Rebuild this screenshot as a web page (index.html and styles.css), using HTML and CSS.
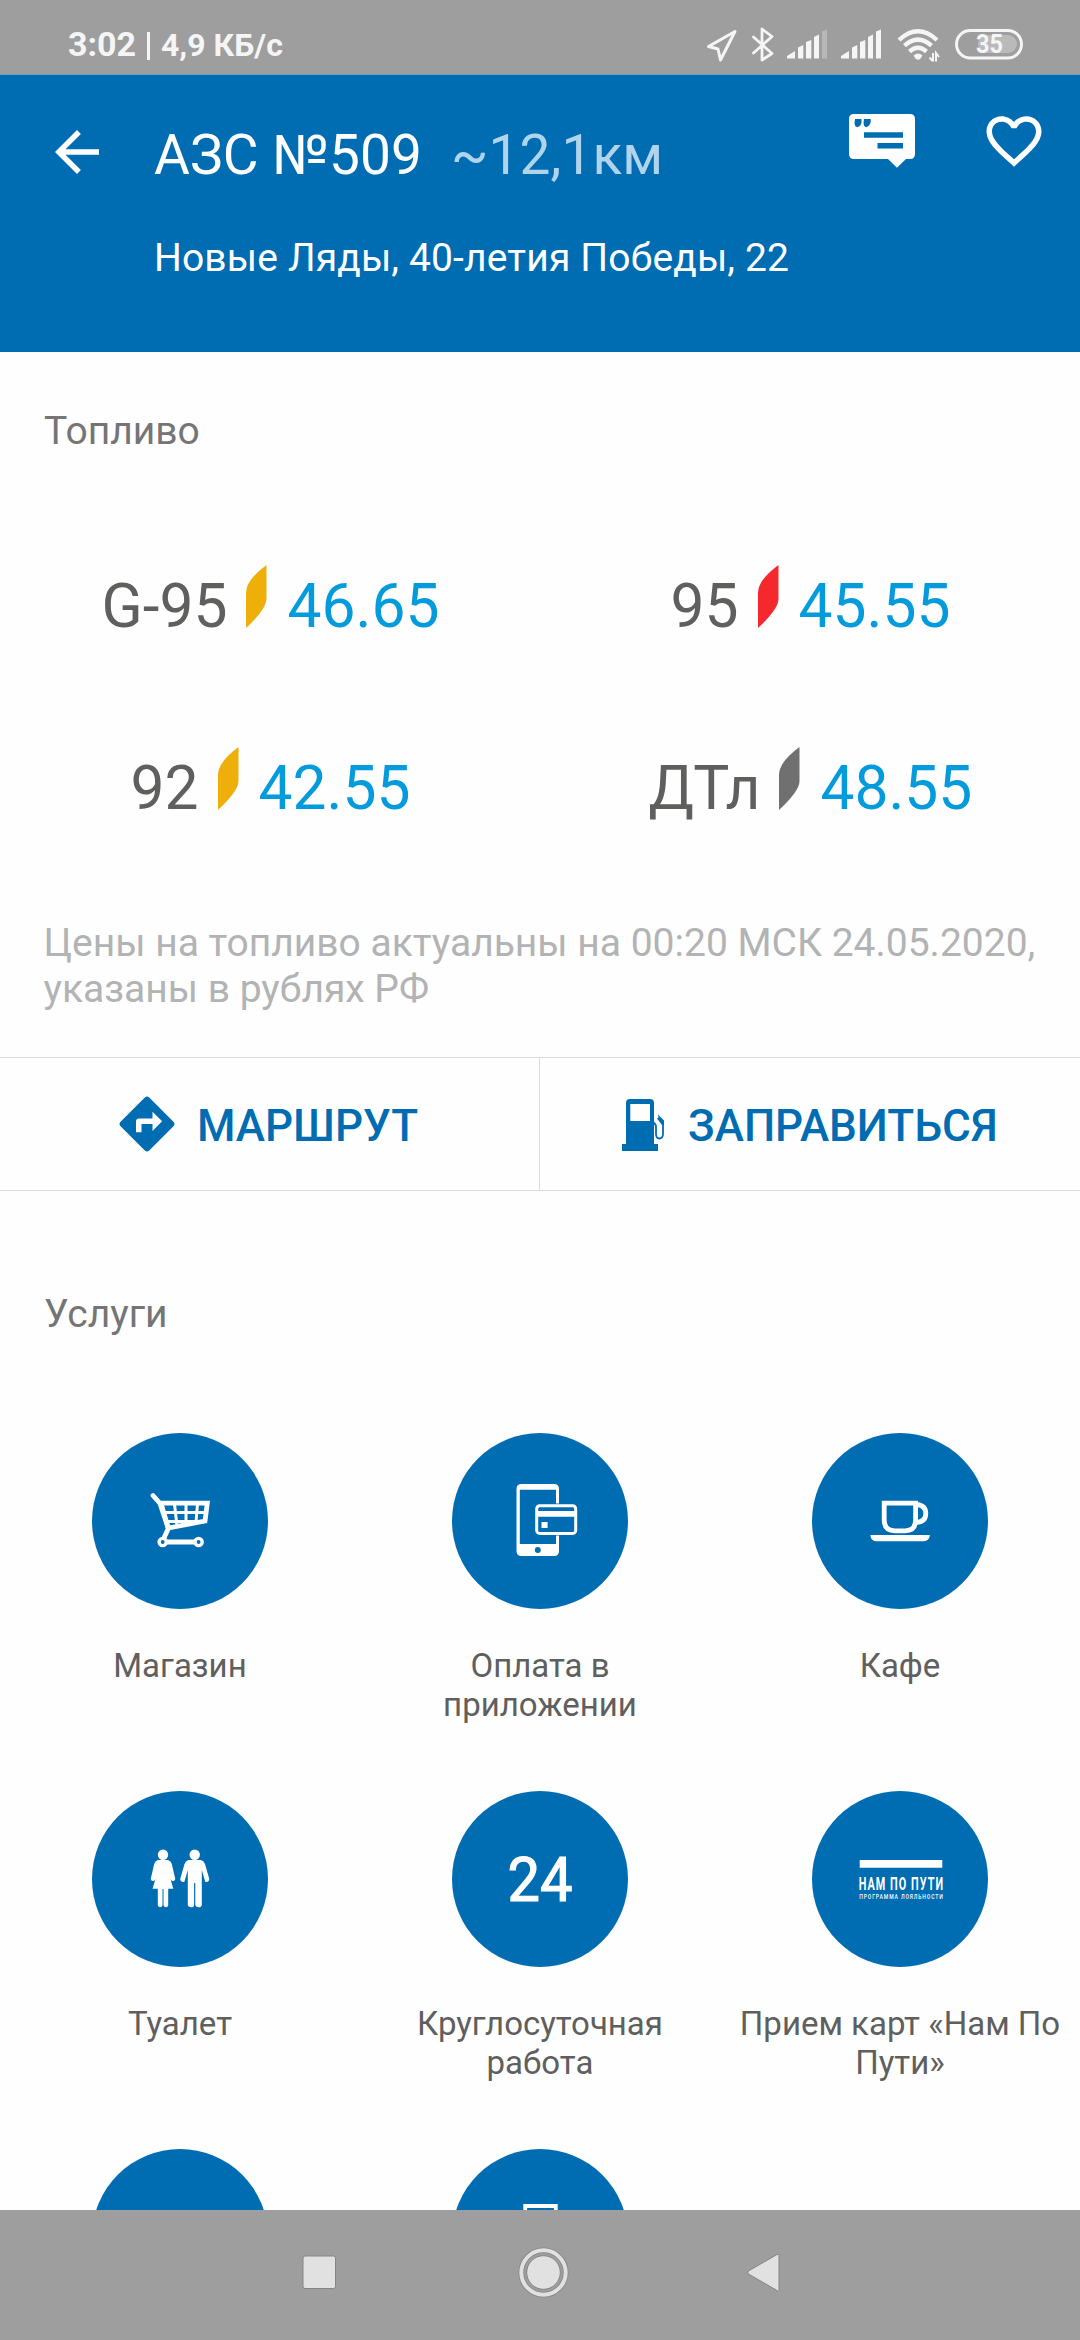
FILE: index.html
```html
<!DOCTYPE html>
<html lang="ru">
<head>
<meta charset="utf-8">
<title>АЗС №509</title>
<link rel="stylesheet" href="styles.css">
</head>
<body>
<div class="screen">
  <div class="status">
    <div class="status-left"><span class="clock">3:02</span><span class="speed"><i class="bar"></i>4,9 КБ/с</span></div>
    <svg class="status-icons" width="336" height="74" viewBox="704 0 336 74">
      <path d="M735 31.5 L708.5 46.5 L718 49 L720.5 60 Z" fill="none" stroke="#f5f5f5" stroke-width="3" stroke-linejoin="round"/>
      <path d="M753.5 37 L772 53.5 L762 60 V29 L772 36.5 L753.5 53" fill="none" stroke="#f5f5f5" stroke-width="2.8" stroke-linejoin="round" stroke-linecap="round"/>
      <g fill="#f5f5f5">
        <path d="M787 58.5 V56 L795 51 V58.5 Z M798 58.5 V47.5 L803.3 45 V58.5 Z M806 58.5 V42 L811.3 40 V58.5 Z M814 58.5 V37 L819 34.5 V58.5 Z"/>
        <path d="M822 58.5 V31.5 L827 29.5 V58.5 Z" opacity=".3"/>
        <path d="M841 58.5 V56 L849 51 V58.5 Z M852 58.5 V47.5 L857.3 45 V58.5 Z M860 58.5 V42 L865.3 40 V58.5 Z M868 58.5 V37 L873 34.5 V58.5 Z M876 58.5 V31.5 L881 29.5 V58.5 Z"/>
        <path d="M913.5 55.5 Q918 51.5 922.5 55.5 L920.5 58.5 Q918 61 915.5 58.5 Z"/>
        <path d="M933 53 V61.5 M929.5 57.5 L932.5 61 M936 61.5 V53 L939 57" fill="none" stroke="#f5f5f5" stroke-width="2"/>
      </g>
      <path d="M899 40 Q918 22.5 937 40 M904.5 45.7 Q918 33.5 931.5 45.7 M909.5 51.5 Q918 44 926.5 51.5" fill="none" stroke="#f5f5f5" stroke-width="4.4"/>
      <rect x="978" y="35" width="39" height="18" rx="9" fill="#bababa"/>
      <rect x="956.5" y="30.5" width="65" height="27.5" rx="13.7" fill="none" stroke="#f5f5f5" stroke-width="3"/>
      <text class="battery-text" x="976" y="53" textLength="27" lengthAdjust="spacingAndGlyphs">35</text>
    </svg>
  </div>

  <header class="header">
    <svg class="back" width="66" height="66" viewBox="0 0 24 24"><path fill="#fff" d="M20 11H7.83l5.59-5.59L12 4l-8 8 8 8 1.41-1.41L7.83 13H20v-2z"/></svg>
    <div class="heading">
      <div class="title-row"><span class="title">АЗС №509</span><span class="distance">~12,1км</span></div>
      <div class="address">Новые Ляды, 40-летия Победы, 22</div>
    </div>
    <svg class="comment" width="66" height="54" viewBox="0 0 66 54">
      <path fill="#fff" d="M5 0H61Q66 0 66 5V40Q66 45 61 45H57L48 53.8L39 45H5Q0 45 0 40V5Q0 0 5 0Z"/>
      <path fill="#006cb2" d="M15 18.3H54V23.7H15Z M28.5 29H54V34.5H28.5Z M6 5H12.5V8Q12.5 12 8 13.3Q5.5 12 5.5 9Z M15 5H21.7V8Q21 12 17 13.3Q14.5 12 14.5 9Z"/>
    </svg>
    <svg class="heart" width="66" height="66" viewBox="0 0 24 24"><path fill="#fff" d="M16.5 3c-1.74 0-3.41.81-4.5 2.09C10.91 3.81 9.24 3 7.5 3 4.42 3 2 5.42 2 8.5c0 3.78 3.4 6.86 8.55 11.54L12 21.35l1.45-1.32C18.6 15.36 22 12.28 22 8.5 22 5.42 19.58 3 16.5 3zm-4.4 15.55l-.1.1-.1-.1C7.14 14.24 4 11.39 4 8.5 4 6.5 5.5 5 7.5 5c1.54 0 3.04.99 3.57 2.36h1.87C13.46 5.99 14.96 5 16.5 5c2 0 3.5 1.5 3.5 3.5 0 2.89-3.14 5.74-7.9 10.05z"/></svg>
  </header>

  <main class="content">
    <h2 class="section-title">Топливо</h2>
    <div class="fuel-grid">
      <div class="fuel"><span>G-95</span><svg class="leaf yellow" viewBox="0 0 21 63"><path d="M20.5 0V34Q20.5 44 0 63V28Q0 15 20.5 0Z"/></svg><span class="price">46.65</span></div>
      <div class="fuel"><span>95</span><svg class="leaf red" viewBox="0 0 21 63"><path d="M20.5 0V34Q20.5 44 0 63V28Q0 15 20.5 0Z"/></svg><span class="price">45.55</span></div>
      <div class="fuel"><span>92</span><svg class="leaf yellow" viewBox="0 0 21 63"><path d="M20.5 0V34Q20.5 44 0 63V28Q0 15 20.5 0Z"/></svg><span class="price">42.55</span></div>
      <div class="fuel"><span>ДТл</span><svg class="leaf grey" viewBox="0 0 21 63"><path d="M20.5 0V34Q20.5 44 0 63V28Q0 15 20.5 0Z"/></svg><span class="price">48.55</span></div>
    </div>
    <p class="note">Цены на топливо актуальны на 00:20 МСК 24.05.2020, указаны в рублях РФ</p>

    <div class="actions">
      <div class="action">
        <svg class="route" width="66" height="66" viewBox="0 0 24 24"><path fill="#006cb2" d="M21.71 11.29l-9-9c-.39-.39-1.02-.39-1.41 0l-9 9c-.39.39-.39 1.02 0 1.41l9 9c.39.39 1.02.39 1.41 0l9-9c.39-.38.39-1.01 0-1.41zM14 14.5V12h-4v3H8v-4c0-.55.45-1 1-1h5V7.5l3.5 3.5-3.5 3.5z"/></svg>
        <span>МАРШРУТ</span>
      </div>
      <div class="action refuel">
        <svg class="pump" width="44" height="54" viewBox="0 0 44 54">
          <path fill="#006cb2" fill-rule="evenodd" d="M4 6Q4 2 8 2H28Q32 2 32 6V47H36V54H0V47H4Z M8.3 7V24H28V7Z"/>
          <path fill="none" stroke="#006cb2" stroke-width="1.8" d="M31 25Q34 27 34 30V37Q34 41.5 37.2 41.5Q41 41.5 41 37V24"/>
          <path fill="#006cb2" d="M36 17.5L42 23.5V28H40L35 21.5L36.5 20.5Z"/>
        </svg>
        <span>ЗАПРАВИТЬСЯ</span>
      </div>
    </div>

    <h2 class="section-title services-title">Услуги</h2>
    <div class="services">
      <div class="service">
        <svg class="disc" viewBox="92 1433 176 176">
          <path d="M153 1495.5L160 1503.5L168.3 1528.5L163.5 1539" class="line w5" stroke-linecap="round"/>
          <path d="M161 1503.2H207.3L205 1521L168.3 1528Z" class="line w5"/>
          <path d="M164 1512.5H206M166 1521.5H205" class="line w3"/>
          <path d="M174.5 1504L177 1526M186 1504V1525M197.5 1504L196 1522" class="line w3"/>
          <path d="M163 1542H198" class="line w5"/>
          <circle cx="162.7" cy="1542" r="3.6" class="wheel"/><circle cx="198.6" cy="1542" r="3.6" class="wheel"/>
        </svg>
        <div class="label">Магазин</div>
      </div>
      <div class="service">
        <svg class="disc" viewBox="452 1433 176 176">
          <path fill="#fff" fill-rule="evenodd" d="M521.5 1484H554Q559 1484 559 1489V1551Q559 1556 554 1556H521.5Q516.5 1556 516.5 1551V1489Q516.5 1484 521.5 1484Z M519.8 1489.7V1544H556V1489.7Z"/>
          <circle cx="537.8" cy="1550" r="3" fill="#006cb2"/>
          <rect x="534" y="1503.5" width="44" height="32" rx="4" fill="#006cb2"/>
          <rect x="536.7" y="1505.8" width="39" height="27.6" rx="3" class="line w3"/>
          <path fill="#fff" d="M537 1511H576V1516.7H537Z M541.5 1522H547.6V1528H541.5Z"/>
        </svg>
        <div class="label">Оплата в<br>приложении</div>
      </div>
      <div class="service">
        <svg class="disc" viewBox="812 1433 176 176">
          <path d="M884.2 1503.2H915.6V1520Q915.6 1530.8 905 1530.8H895Q884.2 1530.8 884.2 1520Z" class="line w5"/>
          <path d="M916 1504.5Q925.8 1505 925.8 1513.5Q925.8 1522 916 1522.5" class="line w5"/>
          <path fill="#fff" d="M870.3 1535H930Q929 1541 924 1541.3H876Q871 1541 870.3 1535Z"/>
        </svg>
        <div class="label">Кафе</div>
      </div>
      <div class="service">
        <svg class="disc" viewBox="92 1791 176 176">
          <g fill="#fff">
            <circle cx="163" cy="1854.8" r="5.2"/>
            <path d="M158 1860H168Q171 1861 171.8 1864L175.3 1879Q174.5 1882 171.5 1880.5L170.5 1879L173.3 1888.8H168.2V1905Q168 1907.3 165.8 1907.3Q163.6 1907 163.5 1905V1889H162.5V1905Q162.3 1907.3 160 1907.3Q158 1907 157.8 1905V1888.8H152.5L155.5 1879L154 1881Q151 1881.5 150.7 1879L154.2 1864Q155 1861 158 1860Z"/>
            <circle cx="194.7" cy="1854.8" r="5.2"/>
            <path d="M188.5 1860H201Q204 1861 205 1864L209.3 1879Q209 1882.5 205.3 1882L201.8 1870V1905Q201.5 1907.3 198.5 1907.3Q195.5 1907 195.3 1905V1883H194.1V1905Q194 1907.3 191 1907.3Q188 1907 187.8 1905V1870L184.3 1882Q180.5 1882.5 180.2 1879L184.5 1864Q185.5 1861 188.5 1860Z"/>
          </g>
        </svg>
        <div class="label">Туалет</div>
      </div>
      <div class="service">
        <svg class="disc" viewBox="452 1791 176 176"><text class="hours" x="507.5" y="1901" textLength="65" lengthAdjust="spacingAndGlyphs">24</text></svg>
        <div class="label">Круглосуточная<br>работа</div>
      </div>
      <div class="service">
        <svg class="disc" viewBox="812 1791 176 176">
          <path fill="#fff" d="M859.7 1860H942.3V1867.7H859.7Z"/>
          <text class="loyal-name" x="858.7" y="1889.5" textLength="85.5" lengthAdjust="spacingAndGlyphs">НАМ ПО ПУТИ</text>
          <text class="loyal-sub" x="859.2" y="1898.8" textLength="84.5" lengthAdjust="spacingAndGlyphs">ПРОГРАММА ЛОЯЛЬНОСТИ</text>
        </svg>
        <div class="label">Прием карт «Нам По<br>Пути»</div>
      </div>
      <div class="service"><svg class="disc" viewBox="92 2149 176 176"></svg></div>
      <div class="service"><svg class="disc" viewBox="452 2149 176 176"><path d="M525.2 2240V2206H555.8V2240Z" class="line w4"/></svg></div>
    </div>
  </main>

  <nav class="navbar">
    <svg width="480" height="60" viewBox="301 2243 480 60">
      <rect x="303" y="2256" width="32.5" height="32.5" rx="2" fill="#e1e1e1" stroke="#858585" stroke-width="1"/>
      <circle cx="543.5" cy="2272.5" r="22.2" fill="none" stroke="#858585" stroke-width="5.6"/>
      <circle cx="543.5" cy="2272.5" r="22.2" fill="none" stroke="#e1e1e1" stroke-width="4"/>
      <circle cx="543.5" cy="2272.5" r="16.8" fill="#e1e1e1" stroke="#858585" stroke-width="1"/>
      <path d="M779 2255V2290.5Q778.5 2292 777 2290.5L748.5 2274Q747 2272.5 748.5 2271L777 2254.5Q778.5 2253.5 779 2255Z" fill="#e1e1e1" stroke="#858585" stroke-width="1"/>
    </svg>
  </nav>
</div>
</body>
</html>
```

FILE: styles.css
```css
* { box-sizing: border-box; }

body {
  margin: 0;
  background: #fefefe;
  font-family: Roboto, sans-serif;
}

.screen {
  display: flex;
  flex-direction: column;
  width: 1080px;
  height: 2340px;
  overflow: hidden;
}

/* status bar */
.status {
  display: flex;
  justify-content: space-between;
  flex: none;
  height: 75px;
  padding: 0 40px 0 68px;
  background: #9e9e9e;
  border-bottom: 1px solid #62a2cc;
}

.status-left {
  display: flex;
  align-items: baseline;
  padding-top: 25px;
  color: #f5f5f5;
  font-weight: 700;
  line-height: 38px;
}

.clock { width: 79px; font-size: 34px; }

.speed { font-size: 32px; white-space: nowrap; }

.bar {
  display: inline-block;
  width: 3px;
  height: 28px;
  margin-right: 11px;
  background: #f5f5f5;
  vertical-align: -4px;
}

.battery-text { font-size: 25px; font-weight: 700; fill: #f5f5f5; }

/* header */
.header {
  display: flex;
  align-items: flex-start;
  flex: none;
  height: 277px;
  padding-left: 44px;
  background: #006cb2;
  color: #fff;
}

.back { margin-top: 44px; }

.heading { width: 695px; margin-left: 44px; padding-top: 48px; }

.title-row {
  display: flex;
  gap: 29px;
  font-size: 55px;
  line-height: 64px;
  letter-spacing: 0.1px;
  white-space: nowrap;
}

.distance { color: #b0d4ec; }

.address {
  margin-top: 48px;
  font-size: 39px;
  line-height: 46px;
  letter-spacing: 0.15px;
}

.comment { margin-top: 39px; }

.heart { margin: 33px 0 0 65.5px; }

/* content */
.content { flex: 1; min-height: 0; overflow: hidden; }

.section-title {
  margin: 0;
  padding: 56px 44px 61px;
  color: #757575;
  font-size: 39px;
  font-weight: 400;
  line-height: 46px;
}

.services-title { padding: 100px 44px 96px; }

.fuel-grid {
  display: grid;
  grid-template-columns: 1fr 1fr;
  grid-auto-rows: 182px;
}

.fuel {
  display: flex;
  align-items: center;
  justify-content: center;
  gap: 19px;
  padding-left: 1px;
  color: #5f5f5e;
  font-size: 60.5px;
  line-height: 71px;
}

.price { margin-left: 1px; color: #049bdc; }

.leaf { width: 21px; height: 63px; margin-bottom: 19px; }
.yellow { fill: #efaf0b; }
.red { fill: #f5282e; }
.grey { fill: #707070; }

.note {
  margin: 0;
  padding: 41px 20px 45px 43.5px;
  color: #b2b3b4;
  font-size: 39px;
  line-height: 46px;
}

.actions {
  display: grid;
  grid-template-columns: 540px 540px;
  height: 134px;
  border-top: 1px solid #dcdcdc;
  border-bottom: 1px solid #dcdcdc;
}

.action {
  display: flex;
  align-items: center;
  padding-left: 114px;
  border-right: 1px solid #dcdcdc;
  color: #006cb2;
  font-size: 44px;
  font-weight: 500;
  line-height: 52px;
}

.action span { margin: 4px 0 0 17px; }

.refuel { padding-left: 82px; border-right: 0; }
.refuel span { margin-left: 22px; }

/* services */
.services {
  display: grid;
  grid-template-columns: repeat(3, 360px);
  grid-auto-rows: 358px;
}

.service {
  display: flex;
  flex-direction: column;
  align-items: center;
}

.disc {
  flex: none;
  width: 176px;
  height: 176px;
  border-radius: 50%;
  overflow: visible;
  background: #006cb2;
}

.label {
  margin-top: 37px;
  color: #5f5f5e;
  font-size: 33px;
  line-height: 39px;
  text-align: center;
  white-space: nowrap;
}

.line { fill: none; stroke: #fff; }
.w3 { stroke-width: 3px; }
.w4 { stroke-width: 3.8px; }
.w5 { stroke-width: 4.8px; }
.wheel { fill: #006cb2; stroke: #fff; stroke-width: 3.4px; }

.hours { fill: #fff; stroke: #fff; stroke-width: 1.2px; font-size: 62px; font-weight: 400; }
.loyal-name { fill: #fff; font-size: 18.8px; font-weight: 700; letter-spacing: 1.8px; }
.loyal-sub { fill: #fff; font-size: 7px; font-weight: 500; letter-spacing: 1.2px; }

/* system navigation */
.navbar {
  display: flex;
  align-items: flex-start;
  flex: none;
  height: 130px;
  padding: 33px 0 0 301px;
  background: #9e9e9e;
}
```
